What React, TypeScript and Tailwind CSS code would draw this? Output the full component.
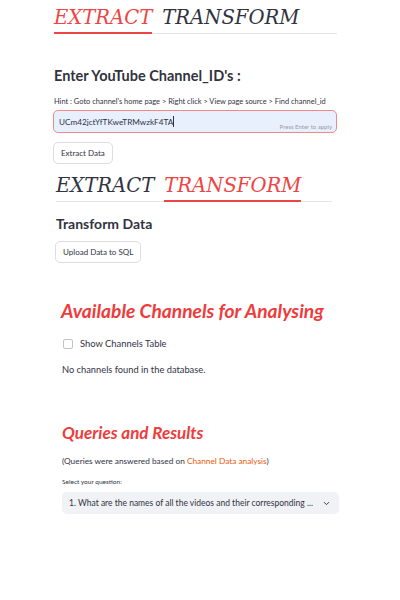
import { ChevronDown } from "lucide-react";

const sans = { fontFamily: 'Lato, "Noto Sans", sans-serif' };
const serif = { fontFamily: '"DejaVu Serif", serif' };

function NavHeader({ active }: { active: "extract" | "transform" }) {
  const tab = (name: "extract" | "transform", label: string) => (
    <span
      className={`relative text-[19.6px] leading-[24px] italic ${
        active === name ? "text-[#ef4444]" : "text-[#31333f]"
      }`}
      style={serif}
    >
      {label}
      {active === name && (
        <span className="absolute left-0 right-0 -bottom-[4px] h-[2px] bg-[#ef4444]" />
      )}
    </span>
  );
  return (
    <div className="flex items-end gap-[10px] border-b border-[#e6e6e9] pb-[3px]">
      {tab("extract", "EXTRACT")}
      {tab("transform", "TRANSFORM")}
    </div>
  );
}

export default function App() {
  return (
    <div className="w-[400px] h-[600px] bg-white text-[#31333f]" style={sans}>
      {/* extract section */}
      <div className="pl-[54px] pr-[63px] pt-[6px]">
        <NavHeader active="extract" />
        <h2 className="mt-[32px] text-[14.5px] font-bold leading-[20px]">Enter YouTube Channel_ID's :</h2>
        <p className="mt-[11px] text-[7.45px] leading-[10px] whitespace-nowrap">
          Hint : Goto channel's home page &gt; Right click &gt; View page source &gt; Find channel_id
        </p>
        <div className="mt-[3px] -ml-[1px] relative h-[23px] rounded-[5px] border border-[#f08a8a] bg-[#e8f0fe] flex items-center px-[5px]">
          <span className="text-[8.2px] leading-[12px]">UCm42jctYfTKweTRMwzkF4TA</span>
          <span className="w-px h-[11px] bg-[#31333f]" />
          <span className="absolute right-[4px] bottom-[1px] text-[6px] text-[#9a9ba3]">Press Enter to apply</span>
        </div>
        <button className="mt-[9px] -ml-[1px] h-[22px] px-[7px] rounded-[5px] border border-[#dcdde1] bg-white text-[8px]">
          Extract Data
        </button>
      </div>

      {/* transform section */}
      <div className="pl-[56px] pr-[68px] mt-[10px]">
        <NavHeader active="transform" />
        <h2 className="mt-[13px] text-[14px] font-bold leading-[18px]">Transform Data</h2>
        <button className="mt-[8px] -ml-[1px] h-[22px] px-[7px] rounded-[5px] border border-[#dcdde1] bg-white text-[8px]">
          Upload Data to SQL
        </button>
      </div>

      {/* channels */}
      <div className="pl-[62px] pr-[61px] mt-[36px]">
        <h2 className="ml-[-1px] text-[19.2px] leading-[24px] font-bold italic text-[#ef3b3b] whitespace-nowrap">
          Available Channels for Analysing
        </h2>
        <label className="mt-[15px] flex items-center gap-[7px] ml-[1px]">
          <span className="w-[10px] h-[10px] rounded-[2px] border border-[#c3c4ca] bg-white" />
          <span className="text-[9.4px] leading-[12px]">Show Channels Table</span>
        </label>
        <p className="mt-[14px] text-[9.3px] leading-[12px]">No channels found in the database.</p>

        <h2 className="mt-[47px] text-[17px] leading-[20px] font-bold italic text-[#ef3b3b]">Queries and Results</h2>
        <p className="mt-[13px] text-[8.3px] leading-[11px]">
          (Queries were answered based on <span className="text-[#e8590c]">Channel Data analysis</span>)
        </p>
        <p className="mt-[10px] text-[6.5px] leading-[9px]">Select your question:</p>
        <div className="mt-[6px] h-[22px] rounded-[5px] bg-[#f0f2f6] flex items-center pl-[7px] pr-[8px] w-[277px]">
          <span className="flex-1 min-w-0 whitespace-nowrap overflow-hidden text-[8.5px] leading-[11px]">
            1. What are the names of all the videos and their corresponding ...
          </span>
          <ChevronDown size={9} strokeWidth={2.5} className="ml-[6px] shrink-0 text-[#31333f]" />
        </div>
      </div>
    </div>
  );
}
